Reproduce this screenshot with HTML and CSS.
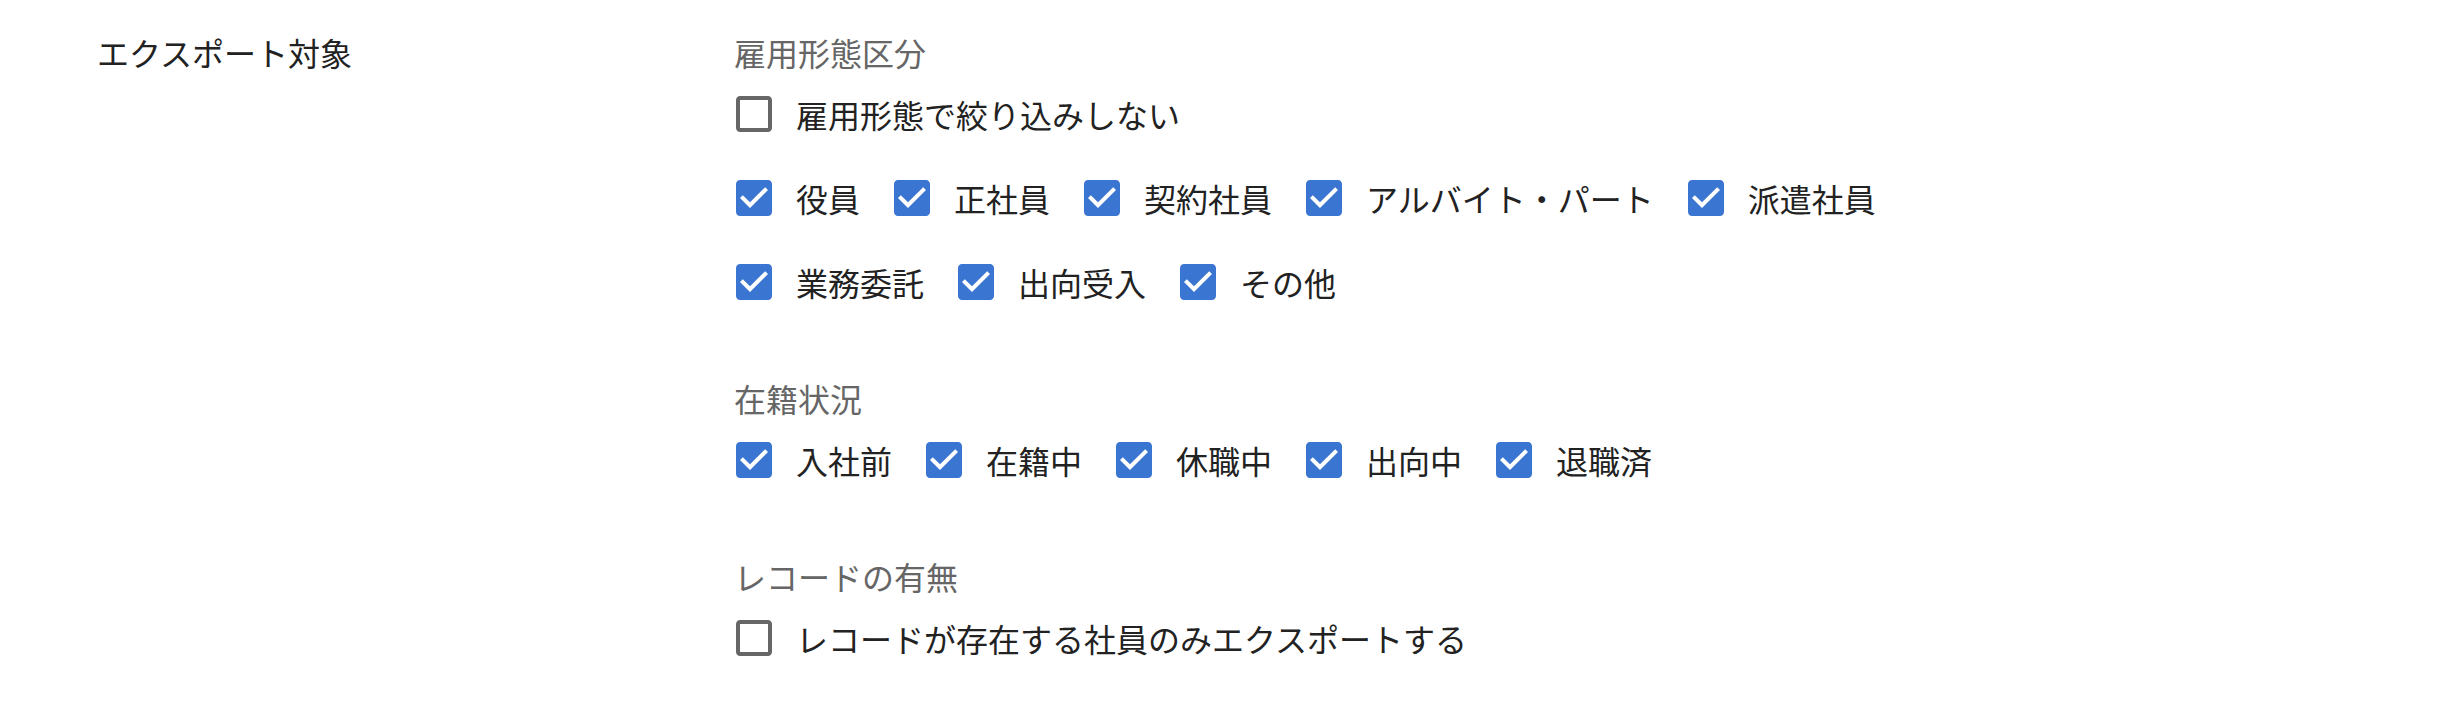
FILE: index.html
```html
<!DOCTYPE html>
<html lang="ja">
<head>
<meta charset="utf-8">
<title>エクスポート対象</title>
<link rel="stylesheet" href="styles.css">
</head>
<body>
<div class="page">
  <div class="field">
    <div class="field-label">エクスポート対象</div>
    <div class="field-body">
      <section class="group">
        <div class="group-title">雇用形態区分</div>
        <div class="options">
          <label class="opt"><span class="cb"><svg viewBox="0 0 24 24"><path class="off" d="M19 5v14H5V5h14m0-2H5c-1.11 0-2 .9-2 2v14c0 1.1.89 2 2 2h14c1.11 0 2-.9 2-2V5c0-1.1-.89-2-2-2z"/></svg></span><span class="txt">雇用形態で絞り込みしない</span></label>
        </div>
        <div class="options">
          <label class="opt"><span class="cb"><svg viewBox="0 0 24 24"><rect class="bg" x="5" y="5" width="14" height="14"/><path class="on" d="M19 3H5c-1.11 0-2 .9-2 2v14c0 1.1.89 2 2 2h14c1.11 0 2-.9 2-2V5c0-1.1-.89-2-2-2zm-9 14l-5-5 1.41-1.41L10 14.17l7.59-7.59L19 8l-9 9z"/></svg></span><span class="txt">役員</span></label>
          <label class="opt"><span class="cb"><svg viewBox="0 0 24 24"><rect class="bg" x="5" y="5" width="14" height="14"/><path class="on" d="M19 3H5c-1.11 0-2 .9-2 2v14c0 1.1.89 2 2 2h14c1.11 0 2-.9 2-2V5c0-1.1-.89-2-2-2zm-9 14l-5-5 1.41-1.41L10 14.170l7.59-7.590L19 8l-9 9z"/></svg></span><span class="txt">正社員</span></label>
          <label class="opt"><span class="cb"><svg viewBox="0 0 24 24"><rect class="bg" x="5" y="5" width="14" height="14"/><path class="on" d="M19 3H5c-1.11 0-2 .9-2 2v14c0 1.1.89 2 2 2h14c1.11 0 2-.9 2-2V5c0-1.1-.89-2-2-2zm-9 14l-5-5 1.41-1.41L10 14.17l7.59-7.59L19 8l-9 9z"/></svg></span><span class="txt">契約社員</span></label>
          <label class="opt"><span class="cb"><svg viewBox="0 0 24 24"><rect class="bg" x="5" y="5" width="14" height="14"/><path class="on" d="M19 3H5c-1.11 0-2 .9-2 2v14c0 1.1.89 2 2 2h14c1.11 0 2-.9 2-2V5c0-1.1-.89-2-2-2zm-9 14l-5-5 1.41-1.41L10 14.17l7.59-7.59L19 8l-9 9z"/></svg></span><span class="txt">アルバイト・パート</span></label>
          <label class="opt"><span class="cb"><svg viewBox="0 0 24 24"><rect class="bg" x="5" y="5" width="14" height="14"/><path class="on" d="M19 3H5c-1.11 0-2 .9-2 2v14c0 1.1.89 2 2 2h14c1.11 0 2-.9 2-2V5c0-1.1-.89-2-2-2zm-9 14l-5-5 1.41-1.41L10 14.17l7.59-7.59L19 8l-9 9z"/></svg></span><span class="txt">派遣社員</span></label>
        </div>
        <div class="options">
          <label class="opt"><span class="cb"><svg viewBox="0 0 24 24"><rect class="bg" x="5" y="5" width="14" height="14"/><path class="on" d="M19 3H5c-1.11 0-2 .9-2 2v14c0 1.1.89 2 2 2h14c1.11 0 2-.9 2-2V5c0-1.1-.89-2-2-2zm-9 14l-5-5 1.41-1.41L10 14.17l7.59-7.59L19 8l-9 9z"/></svg></span><span class="txt">業務委託</span></label>
          <label class="opt"><span class="cb"><svg viewBox="0 0 24 24"><rect class="bg" x="5" y="5" width="14" height="14"/><path class="on" d="M19 3H5c-1.11 0-2 .9-2 2v14c0 1.1.89 2 2 2h14c1.11 0 2-.9 2-2V5c0-1.1-.89-2-2-2zm-9 14l-5-5 1.41-1.41L10 14.17l7.59-7.59L19 8l-9 9z"/></svg></span><span class="txt">出向受入</span></label>
          <label class="opt"><span class="cb"><svg viewBox="0 0 24 24"><rect class="bg" x="5" y="5" width="14" height="14"/><path class="on" d="M19 3H5c-1.11 0-2 .9-2 2v14c0 1.1.89 2 2 2h14c1.11 0 2-.9 2-2V5c0-1.1-.89-2-2-2zm-9 14l-5-5 1.41-1.41L10 14.17l7.59-7.59L19 8l-9 9z"/></svg></span><span class="txt">その他</span></label>
        </div>
      </section>

      <section class="group">
        <div class="group-title">在籍状況</div>
        <div class="options">
          <label class="opt"><span class="cb"><svg viewBox="0 0 24 24"><rect class="bg" x="5" y="5" width="14" height="14"/><path class="on" d="M19 3H5c-1.11 0-2 .9-2 2v14c0 1.1.89 2 2 2h14c1.11 0 2-.9 2-2V5c0-1.1-.89-2-2-2zm-9 14l-5-5 1.41-1.41L10 14.17l7.59-7.59L19 8l-9 9z"/></svg></span><span class="txt">入社前</span></label>
          <label class="opt"><span class="cb"><svg viewBox="0 0 24 24"><rect class="bg" x="5" y="5" width="14" height="14"/><path class="on" d="M19 3H5c-1.11 0-2 .9-2 2v14c0 1.1.89 2 2 2h14c1.11 0 2-.9 2-2V5c0-1.1-.89-2-2-2zm-9 14l-5-5 1.41-1.41L10 14.17l7.59-7.59L19 8l-9 9z"/></svg></span><span class="txt">在籍中</span></label>
          <label class="opt"><span class="cb"><svg viewBox="0 0 24 24"><rect class="bg" x="5" y="5" width="14" height="14"/><path class="on" d="M19 3H5c-1.11 0-2 .9-2 2v14c0 1.1.89 2 2 2h14c1.11 0 2-.9 2-2V5c0-1.1-.89-2-2-2zm-9 14l-5-5 1.41-1.41L10 14.17l7.59-7.59L19 8l-9 9z"/></svg></span><span class="txt">休職中</span></label>
          <label class="opt"><span class="cb"><svg viewBox="0 0 24 24"><rect class="bg" x="5" y="5" width="14" height="14"/><path class="on" d="M19 3H5c-1.11 0-2 .9-2 2v14c0 1.1.89 2 2 2h14c1.11 0 2-.9 2-2V5c0-1.1-.89-2-2-2zm-9 14l-5-5 1.41-1.41L10 14.17l7.59-7.59L19 8l-9 9z"/></svg></span><span class="txt">出向中</span></label>
          <label class="opt"><span class="cb"><svg viewBox="0 0 24 24"><rect class="bg" x="5" y="5" width="14" height="14"/><path class="on" d="M19 3H5c-1.11 0-2 .9-2 2v14c0 1.1.89 2 2 2h14c1.11 0 2-.9 2-2V5c0-1.1-.89-2-2-2zm-9 14l-5-5 1.41-1.41L10 14.17l7.59-7.59L19 8l-9 9z"/></svg></span><span class="txt">退職済</span></label>
        </div>
      </section>

      <section class="group">
        <div class="group-title">レコードの有無</div>
        <div class="options">
          <label class="opt"><span class="cb"><svg viewBox="0 0 24 24"><path class="off" d="M19 5v14H5V5h14m0-2H5c-1.11 0-2 .9-2 2v14c0 1.1.89 2 2 2h14c1.11 0 2-.9 2-2V5c0-1.1-.89-2-2-2z"/></svg></span><span class="txt">レコードが存在する社員のみエクスポートする</span></label>
        </div>
      </section>
    </div>
  </div>
</div>
</body>
</html>
```

FILE: styles.css
```css
html, body {
  margin: 0;
  padding: 0;
  background: #ffffff;
}

body {
  font-family: "Noto Sans CJK JP", "Noto Sans", sans-serif;
  font-size: 32px;
  color: #222222;
}

.page {
  padding: 32px 0 0 97px;
}

.field {
  display: flex;
  align-items: flex-start;
}

.field-label {
  width: 637px;
  flex: none;
  line-height: 40px;
  color: #222222;
}

.field-body {
  display: flex;
  flex-direction: column;
  gap: 54px;
}

.group {
  display: flex;
  flex-direction: column;
}

.group-title {
  line-height: 40px;
  color: #666666;
}

.options {
  display: flex;
  flex-wrap: nowrap;
}

.opt {
  display: flex;
  align-items: center;
  height: 84px;
  margin-left: -22px;
  margin-right: 32px;
  cursor: pointer;
}

.opt + .opt {
  margin-left: -22px;
}

.cb {
  width: 84px;
  height: 84px;
  flex: none;
  display: flex;
  align-items: center;
  justify-content: center;
}

.cb svg {
  width: 48px;
  height: 48px;
  display: block;
}

.cb .off {
  fill: #666666;
}

.cb .on {
  fill: #3a75d1;
}

.cb .bg {
  fill: #ffffff;
}

.txt {
  line-height: 40px;
  white-space: nowrap;
}
```
